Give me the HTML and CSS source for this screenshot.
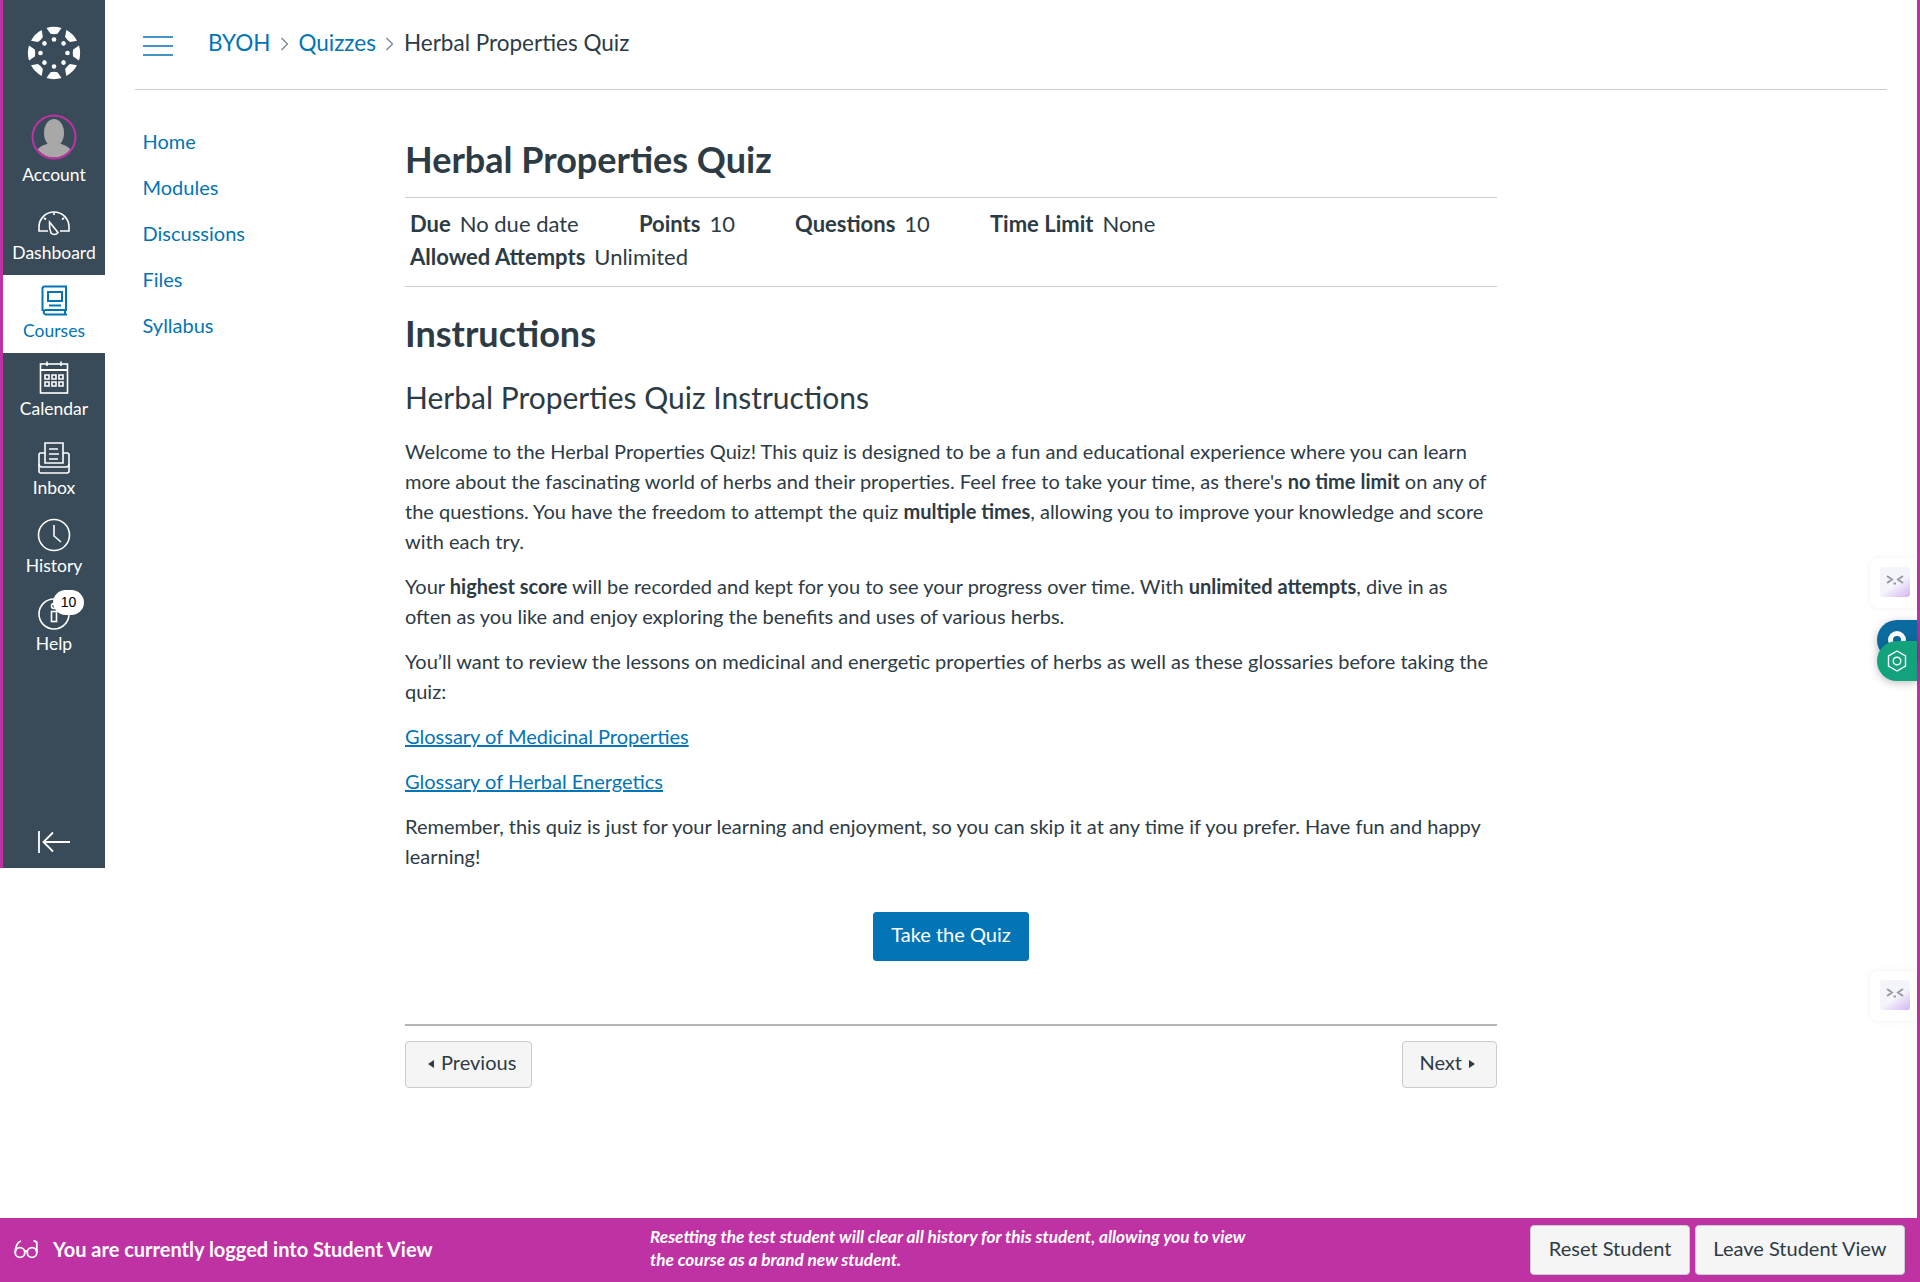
FILE: index.html
```html
<!DOCTYPE html>
<html lang="en">
<head>
    <meta charset="UTF-8">
    <meta name="viewport" content="width=device-width, initial-scale=1.0">
    <title>Herbal Properties Quiz</title>
    <link rel="stylesheet" href="styles.css">
</head>
<body>
    <div class="page">
        <div class="app">
            <nav class="global-nav">
                <div class="logo">
                    <svg width="54" height="54" viewBox="-27 -27 54 54" fill="#fff">
                        <g id="spoke">
                            <path d="M-7.500-25A26 26 0 0 1 7.500-25L3.500-19.200Q0-18.400-3.500-19.200Z"/>
                            <circle cy="-13.500" r="2.300"/>
                        </g>
                        <use href="#spoke" transform="rotate(45)"/>
                        <use href="#spoke" transform="rotate(90)"/>
                        <use href="#spoke" transform="rotate(135)"/>
                        <use href="#spoke" transform="rotate(180)"/>
                        <use href="#spoke" transform="rotate(225)"/>
                        <use href="#spoke" transform="rotate(270)"/>
                        <use href="#spoke" transform="rotate(315)"/>
                    </svg>
                </div>
                <a class="nav-item">
                    <svg class="nav-icon nav-avatar" width="46" height="46" viewBox="0 0 46 46">
                        <clipPath id="avatar-clip"><circle cx="23" cy="23" r="20.500"/></clipPath>
                        <g clip-path="url(#avatar-clip)" fill="#a8a8a8">
                            <ellipse cx="23" cy="19" rx="10" ry="14"/>
                            <ellipse cx="23" cy="42" rx="19" ry="13"/>
                        </g>
                        <circle cx="23" cy="23" r="21.500" fill="none" stroke="#bf32a4" stroke-width="2"/>
                    </svg>
                    <span>Account</span>
                </a>
                <a class="nav-item">
                    <svg class="nav-icon" width="34" height="34" viewBox="0 2 34 34" fill="none" stroke="currentColor" stroke-width="1.600">
                        <path d="M11 28H2V24A15 15 0 0 1 32 24V28H23"/>
                        <path d="M12.500 19L21 29.500A4.500 4.500 0 0 1 14 30Q12 25 12.500 19Z"/>
                        <path d="M17 9.500V12M7 15L9 16.500M27 15L25 16.500"/>
                    </svg>
                    <span>Dashboard</span>
                </a>
                <a class="nav-item active">
                    <svg class="nav-icon" width="34" height="34" viewBox="0 0 34 34" fill="none" stroke="currentColor" stroke-width="2">
                        <path d="M5.500 28V5A2 2 0 0 1 7.500 3.500H29V27H8.500A2.300 2.300 0 0 0 8.500 31.500H30M28 27V31.500"/>
                        <rect x="11" y="9" width="14" height="9"/>
                        <path d="M12 22.500H24"/>
                    </svg>
                    <span>Courses</span>
                </a>
                <a class="nav-item">
                    <svg class="nav-icon" width="34" height="34" viewBox="0 0 34 34" fill="none" stroke="currentColor" stroke-width="1.600">
                        <rect x="3.500" y="3" width="27" height="29"/>
                        <path d="M3.500 9H30.500" stroke-width="2"/>
                        <path d="M10 0.500V5M24 0.500V5"/>
                        <path d="M8 14h4v4h-4zM15 14h4v4h-4zM22 14h4v4h-4zM8 21h4v4h-4zM15 21h4v4h-4zM22 21h4v4h-4z"/>
                    </svg>
                    <span>Calendar</span>
                </a>
                <a class="nav-item">
                    <svg class="nav-icon" width="34" height="34" viewBox="0 -1 34 34" fill="none" stroke="currentColor" stroke-width="1.600">
                        <path d="M8 22V2H26V22Z"/>
                        <path d="M12 8H21M12 13H22M12 18H21"/>
                        <path d="M8 12H3.500Q2 12 2 14V30Q2 32 4 32H30Q32 32 32 30V14Q32 12 30 12H26"/>
                        <path d="M2 23Q2 26 5 26H29Q32 26 32 23"/>
                    </svg>
                    <span>Inbox</span>
                </a>
                <a class="nav-item">
                    <svg class="nav-icon" width="34" height="34" viewBox="0 0 34 34" fill="none" stroke="currentColor" stroke-width="1.600">
                        <circle cx="17" cy="17" r="15.500"/>
                        <path d="M17 7V18L24 24"/>
                    </svg>
                    <span>History</span>
                </a>
                <a class="nav-item">
                    <svg class="nav-icon" width="34" height="34" viewBox="0 -1 34 34" fill="none" stroke="currentColor" stroke-width="1.600">
                        <circle cx="17" cy="17" r="15"/>
                        <rect x="14.500" y="14.500" width="5" height="10"/>
                        <circle cx="17" cy="9" r="2.500"/>
                    </svg>
                    <span class="badge">10</span>
                    <span>Help</span>
                </a>
                <div class="collapse">
                    <svg width="34" height="24" viewBox="0 0 34 24" fill="none" stroke="currentColor" stroke-width="1.800">
                        <path d="M2 1V23"/>
                        <path d="M33 12H7M16 2.500L6.500 12L16 21.500"/>
                    </svg>
                </div>
            </nav>

            <div class="main">
                <header class="topbar">
                    <svg class="hamburger" width="32" height="22" viewBox="0 0 32 22" stroke="#0374b5" stroke-width="1.700">
                        <path d="M1 2H31M1 11H31M1 20H31"/>
                    </svg>
                    <a class="crumb">BYOH</a>
                    <svg class="sep" width="9" height="14" viewBox="0 0 9 14" fill="none" stroke="#73818c" stroke-width="1.200"><path d="M1.500 1L7.500 7L1.500 13"/></svg>
                    <a class="crumb">Quizzes</a>
                    <svg class="sep" width="9" height="14" viewBox="0 0 9 14" fill="none" stroke="#73818c" stroke-width="1.200"><path d="M1.500 1L7.500 7L1.500 13"/></svg>
                    <span>Herbal Properties Quiz</span>
                </header>

                <div class="layout">
                    <ul class="course-nav">
                        <li><a>Home</a></li>
                        <li><a>Modules</a></li>
                        <li><a>Discussions</a></li>
                        <li><a>Files</a></li>
                        <li><a>Syllabus</a></li>
                    </ul>

                    <div class="content">
                        <h1>Herbal Properties Quiz</h1>
                        <div class="facts">
                            <div class="fact-row">
                                <span class="fact w-due"><b>Due</b>No due date</span>
                                <span class="fact w-points"><b>Points</b>10</span>
                                <span class="fact w-questions"><b>Questions</b>10</span>
                                <span class="fact"><b>Time Limit</b>None</span>
                            </div>
                            <div class="fact-row">
                                <span class="fact"><b>Allowed Attempts</b>Unlimited</span>
                            </div>
                        </div>
                        <h2>Instructions</h2>
                        <h3>Herbal Properties Quiz Instructions</h3>
                        <p>Welcome to the Herbal Properties Quiz! This quiz is designed to be a fun and educational experience where you can learn more about the fascinating world of herbs and their properties. Feel free to take your time, as there's <strong>no time limit</strong> on any of the questions. You have the freedom to attempt the quiz <strong>multiple times</strong>, allowing you to improve your knowledge and score with each try.</p>
                        <p>Your <strong>highest score</strong> will be recorded and kept for you to see your progress over time. With <strong>unlimited attempts</strong>, dive in as often as you like and enjoy exploring the benefits and uses of various herbs.</p>
                        <p>You’ll want to review the lessons on medicinal and energetic properties of herbs as well as these glossaries before taking the quiz:</p>
                        <p><a class="text-link">Glossary of Medicinal Properties</a></p>
                        <p><a class="text-link">Glossary of Herbal Energetics</a></p>
                        <p>Remember, this quiz is just for your learning and enjoyment, so you can skip it at any time if you prefer. Have fun and happy learning!</p>
                        <div class="take-wrap">
                            <button class="btn-primary">Take the Quiz</button>
                        </div>
                        <div class="pager">
                            <button class="btn btn-prev"><i class="tri-left"></i>Previous</button>
                            <button class="btn btn-next">Next<i class="tri-right"></i></button>
                        </div>
                    </div>
                </div>
            </div>
        </div>

        <footer class="student-bar">
            <div class="student-msg">
                <svg width="24" height="20" viewBox="0 0 24 20" fill="none" stroke="#fff" stroke-width="1.800">
                    <circle cx="6" cy="13.500" r="4.800"/>
                    <circle cx="18" cy="13.500" r="4.800"/>
                    <path d="M1.200 13.500Q1.500 4 7 2M22.800 13.500V4Q22.500 2 19.500 2M10.500 12.500Q12 11.300 13.500 12.500"/>
                </svg>
                <span>You are currently logged into Student View</span>
            </div>
            <div class="student-note">Resetting the test student will clear all history for this student, allowing you to view the course as a brand new student.</div>
            <div class="student-actions">
                <button class="btn btn-bar">Reset Student</button>
                <button class="btn btn-bar">Leave Student View</button>
            </div>
        </footer>
    </div>

    <!-- browser extension widgets sitting over the page -->
    <div class="ext-card ext-top">
        <svg class="ext-face" width="30" height="30" viewBox="0 0 30 30" fill="none" stroke="#9a9aa6" stroke-width="2">
            <path d="M7 9L12 12.500L7 16M23 9L18 12.500L23 16M13.500 16.500H16"/>
        </svg>
    </div>
    <div class="ext-card ext-bottom">
        <svg class="ext-face" width="30" height="30" viewBox="0 0 30 30" fill="none" stroke="#9a9aa6" stroke-width="2">
            <path d="M7 9L12 12.500L7 16M23 9L18 12.500L23 16M13.500 16.500H16"/>
        </svg>
    </div>
    <div class="ext-pill ext-blue">
        <svg width="20" height="20" viewBox="0 0 20 20"><circle cx="10" cy="10" r="9" fill="#fff"/><circle cx="10" cy="10" r="4" fill="#0b6a9f"/></svg>
    </div>
    <div class="ext-pill ext-green">
        <svg width="20" height="22" viewBox="0 0 20 22" fill="none" stroke="#fff" stroke-width="1.400">
            <path d="M10 1L18.500 6V16L10 21L1.500 16V6Z"/>
            <circle cx="10" cy="11" r="3.800"/>
        </svg>
    </div>
</body>
</html>
```

FILE: styles.css
```css
* {
    box-sizing: border-box;
}

body {
    margin: 0;
    font-family: 'Lato', sans-serif;
    font-size: 20px;
    color: #2d3b45;
    background-color: #fff;
    overflow: hidden;
}

a {
    color: #0374b5;
    text-decoration: none;
}

.page {
    display: flex;
    flex-direction: column;
    height: 1282px;
}

.app {
    display: flex;
    flex: 1;
    min-height: 0;
    border-right: 3px solid #bf32a4;
}

/* global nav */
.global-nav {
    display: flex;
    flex-direction: column;
    flex: none;
    width: 105px;
    height: 868px;
    background-color: #394b58;
    border-left: 3px solid #bf32a4;
    color: #fff;
}

.logo {
    display: flex;
    justify-content: center;
    flex: none;
    padding-top: 26px;
    height: 118.600px;
}

.nav-item {
    position: relative;
    display: flex;
    flex-direction: column;
    align-items: center;
    justify-content: flex-end;
    flex: none;
    height: 78.200px;
    padding-bottom: 11px;
    color: #fff;
    font-size: 17.500px;
    line-height: 22px;
}

.nav-item.active {
    background-color: #fff;
    color: #0374b5;
}

.nav-icon {
    display: block;
    flex: none;
    margin-bottom: 3px;
}

.nav-avatar {
    margin-bottom: 4px;
}

.badge {
    position: absolute;
    top: 2px;
    left: 50px;
    width: 31px;
    height: 25px;
    border-radius: 13px;
    background-color: #fff;
    color: #000;
    font-family: 'Liberation Sans', sans-serif;
    font-size: 14px;
    line-height: 25px;
    text-align: center;
}

.collapse {
    display: flex;
    justify-content: center;
    margin-top: auto;
    padding-bottom: 14px;
}

/* main column */
.main {
    flex: 1;
    min-width: 0;
    padding: 0 30px;
}

.topbar {
    display: flex;
    align-items: center;
    height: 90px;
    padding-left: 7px;
    padding-bottom: 5px;
    border-bottom: 1px solid #c7cdd1;
    font-size: 22.500px;
}

.hamburger {
    margin-top: 8px;
    margin-right: 34px;
}

.crumb {
    color: #0374b5;
}

.sep {
    margin: 4px 9.500px 0;
}

.layout {
    display: flex;
}

.course-nav {
    flex: none;
    width: 270px;
    margin: 0;
    padding: 28px 0 0 7.500px;
    list-style: none;
}

.course-nav li {
    height: 46px;
    line-height: 46px;
}

.content {
    width: 1092px;
}

h1 {
    margin: 0;
    padding-top: 46px;
    height: 108px;
    border-bottom: 1px solid #c7cdd1;
    font-size: 36px;
    line-height: 46px;
    font-weight: 700;
}

.facts {
    height: 89px;
    padding: 9px 5px 0;
    border-bottom: 1px solid #c7cdd1;
    font-size: 22px;
    line-height: 33px;
}

.fact-row {
    display: flex;
}

.fact b {
    margin-right: 9px;
}

.w-due {
    width: 229px;
}

.w-points {
    width: 156px;
}

.w-questions {
    width: 195px;
}

h2 {
    margin: 0;
    padding-top: 23px;
    font-size: 36px;
    line-height: 46px;
    font-weight: 700;
}

h3 {
    margin: 17px 0 0;
    font-size: 30px;
    line-height: 48px;
    font-weight: 400;
}

p {
    margin: 15px 0 0;
    line-height: 30px;
}

.text-link {
    text-decoration: underline;
}

strong {
    font-weight: 700;
}

.take-wrap {
    display: flex;
    justify-content: center;
    margin-top: 41px;
}

button {
    font-family: 'Lato', sans-serif;
    cursor: pointer;
}

.btn-primary {
    width: 156px;
    height: 49px;
    padding: 0 0 6px;
    border: 1px solid #0374b5;
    border-radius: 3px;
    background-color: #0374b5;
    color: #fff;
    font-size: 20px;
}

.pager {
    display: flex;
    justify-content: space-between;
    margin-top: 63px;
    padding-top: 15px;
    border-top: 2px solid #b5b5b5;
}

.btn {
    height: 47px;
    padding: 0 16px 5px;
    border: 1px solid #c7cdd1;
    border-radius: 4px;
    background-color: #f5f5f5;
    color: #2d3b45;
    font-size: 20px;
}

.btn-prev {
    padding-left: 22px;
    padding-right: 15px;
}

.btn-next {
    padding-left: 16px;
    padding-right: 21px;
}

.tri-left,
.tri-right {
    display: inline-block;
    border-top: 4px solid transparent;
    border-bottom: 4px solid transparent;
    vertical-align: 2px;
}

.tri-left {
    margin-right: 7px;
    border-right: 6px solid #2d3b45;
}

.tri-right {
    margin-left: 7px;
    border-left: 6px solid #2d3b45;
}

/* student view bar */
.student-bar {
    display: flex;
    align-items: center;
    flex: none;
    height: 64px;
    padding: 0 15px 0 14px;
    background-color: #bf32a4;
    color: #fff;
}

.student-msg {
    display: flex;
    align-items: center;
    gap: 15px;
    width: 636px;
    padding-bottom: 2.500px;
    font-weight: 700;
}

.student-note {
    width: 610px;
    padding-bottom: 5px;
    font-size: 17.200px;
    line-height: 23px;
    font-style: italic;
    font-weight: 700;
}

.student-actions {
    display: flex;
    gap: 5px;
    margin-left: auto;
}

.btn-bar {
    height: 50px;
    padding: 0 17.500px 5px;
}

/* extension widgets */
.ext-card {
    position: absolute;
    left: 1870px;
    width: 47px;
    height: 50px;
    padding: 9px 0 0 10px;
    background-color: #fff;
    border-radius: 8px 0 0 8px;
    box-shadow: 0 0 6px rgba(0, 0, 0, .06);
}

.ext-top {
    top: 558px;
}

.ext-bottom {
    top: 971px;
}

.ext-face {
    display: block;
    border-radius: 3px;
    background: linear-gradient(145deg, #f4f5fa 55%, #d6b4f0);
}

.ext-pill {
    position: absolute;
    left: 1877px;
    display: flex;
    align-items: center;
    justify-content: center;
    width: 40px;
    height: 40px;
    border-radius: 20px 0 0 20px;
    box-shadow: 0 2px 8px rgba(0, 0, 0, .25);
}

.ext-blue {
    top: 620px;
    background-color: #0b6a9f;
}

.ext-green {
    top: 641px;
    background-color: #12a37c;
}
```
